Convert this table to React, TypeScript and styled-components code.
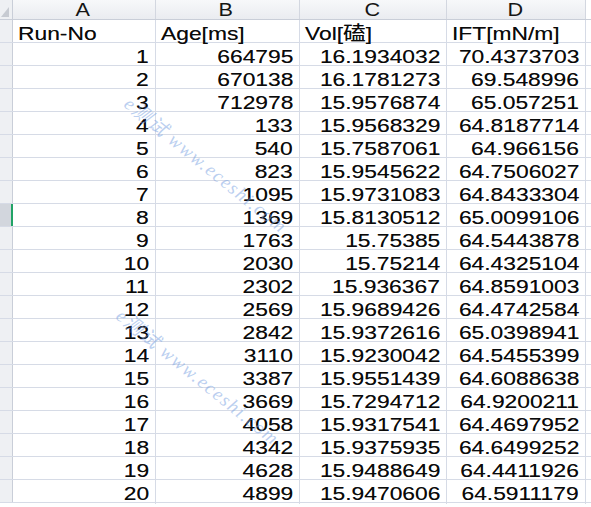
import React from "react";
import styled, { createGlobalStyle } from "styled-components";

const Global = createGlobalStyle`
  html, body { margin: 0; padding: 0; background: #ffffff; overflow: hidden; }
  #root { width: 591px; height: 507px; }
`;

const COLS = "13px 143px 144px 147px 139px 5px";

const Sheet = styled.div`
  position: relative;
  width: 591px;
  height: 507px;
  overflow: hidden;
  background: #ffffff;
  font-family: "Liberation Sans", Arial, "Noto Sans CJK SC", sans-serif;
  color: #0a0a0a;
`;

const HeaderRow = styled.div`
  display: grid;
  grid-template-columns: ${COLS};
  height: 20px;
  background: linear-gradient(#f7f8fa, #eaecf0);
  border-bottom: 1px solid #c9ced8;
  box-sizing: border-box;
`;

const ColHead = styled.div`
  display: flex;
  align-items: flex-end;
  justify-content: center;
  border-right: 1px solid #d3d7e0;
  font-size: 18px;
  line-height: 17px;
  color: #151515;
`;

const Corner = styled.div`
  position: relative;
  border-right: 1px solid #c9ced8;
  background: #eef0f3;
  &::after {
    content: "";
    position: absolute;
    right: 3px;
    bottom: 2px;
    width: 0;
    height: 0;
    border-left: 8px solid transparent;
    border-bottom: 10px solid #c7cbd2;
  }
`;

const Row = styled.div`
  display: grid;
  grid-template-columns: ${COLS};
  height: 23px;
  box-sizing: border-box;
  border-bottom: 1px solid #d6dbe6;
`;

const RowHead = styled.div<{ $selected?: boolean }>`
  background: ${(p) => (p.$selected ? "#d2d6dd" : "#eef0f3")};
  border-right: ${(p) => (p.$selected ? "2px solid #21a366" : "1px solid #c9ced8")};
  box-sizing: border-box;
`;

const Cell = styled.div<{ $align?: "left" | "right" }>`
  display: flex;
  align-items: flex-end;
  justify-content: ${(p) => (p.$align === "left" ? "flex-start" : "flex-end")};
  padding: ${(p) => (p.$align === "left" ? "0 0 0 5px" : "0 6px 0 0")};
  border-right: 1px solid #d6dbe6;
  font-size: 19px;
  line-height: 21px;
  margin-bottom: -2px;
  white-space: nowrap;
  text-shadow: 0 0 0.6px rgba(0, 0, 0, 0.55);
`;

const Txt = styled.span<{ $align?: "left" | "right" }>`
  display: inline-block;
  transform: scaleX(1.2);
  transform-origin: ${(p) => (p.$align === "left" ? "left" : "right")} bottom;
`;

const Tail = styled.div`
  background: #ffffff;
`;

const Watermark = styled.div`
  position: absolute;
  transform-origin: left center;
  transform: rotate(39deg);
  font-family: "Liberation Serif", "Noto Sans CJK SC", serif;
  font-style: italic;
  font-size: 19px;
  letter-spacing: 1.5px;
  color: rgba(120, 160, 225, 0.5);
  white-space: nowrap;
  pointer-events: none;
`;

const rows: [string, string, string, string][] = [
  ["1", "664795", "16.1934032", "70.4373703"],
  ["2", "670138", "16.1781273", "69.548996"],
  ["3", "712978", "15.9576874", "65.057251"],
  ["4", "133", "15.9568329", "64.8187714"],
  ["5", "540", "15.7587061", "64.966156"],
  ["6", "823", "15.9545622", "64.7506027"],
  ["7", "1095", "15.9731083", "64.8433304"],
  ["8", "1369", "15.8130512", "65.0099106"],
  ["9", "1763", "15.75385", "64.5443878"],
  ["10", "2030", "15.75214", "64.4325104"],
  ["11", "2302", "15.936367", "64.8591003"],
  ["12", "2569", "15.9689426", "64.4742584"],
  ["13", "2842", "15.9372616", "65.0398941"],
  ["14", "3110", "15.9230042", "64.5455399"],
  ["15", "3387", "15.9551439", "64.6088638"],
  ["16", "3669", "15.7294712", "64.9200211"],
  ["17", "4058", "15.9317541", "64.4697952"],
  ["18", "4342", "15.9375935", "64.6499252"],
  ["19", "4628", "15.9488649", "64.4411926"],
  ["20", "4899", "15.9470606", "64.5911179"],
];

const headers = ["Run-No", "Age[ms]", "Vol[磕]", "IFT[mN/m]"];

export default function App() {
  return (
    <Sheet>
      <Global />
      <HeaderRow>
        <Corner />
        {["A", "B", "C", "D"].map((l) => (
          <ColHead key={l}>
            <Txt>{l}</Txt>
          </ColHead>
        ))}
        <Tail />
      </HeaderRow>
      <Row>
        <RowHead />
        {headers.map((h) => (
          <Cell key={h} $align="left">
            <Txt $align="left">{h}</Txt>
          </Cell>
        ))}
        <Tail />
      </Row>
      {rows.map((r, i) => (
        <Row key={r[0]}>
          <RowHead $selected={i === 7} />
          {r.map((v, j) => (
            <Cell key={j} $align="right">
              <Txt $align="right">{v}</Txt>
            </Cell>
          ))}
          <Tail />
        </Row>
      ))}
      <Watermark style={{ left: 128, top: 86 }}>e测试 www.eceshi.com</Watermark>
      <Watermark style={{ left: 120, top: 298 }}>e测试 www.eceshi.com</Watermark>
    </Sheet>
  );
}
